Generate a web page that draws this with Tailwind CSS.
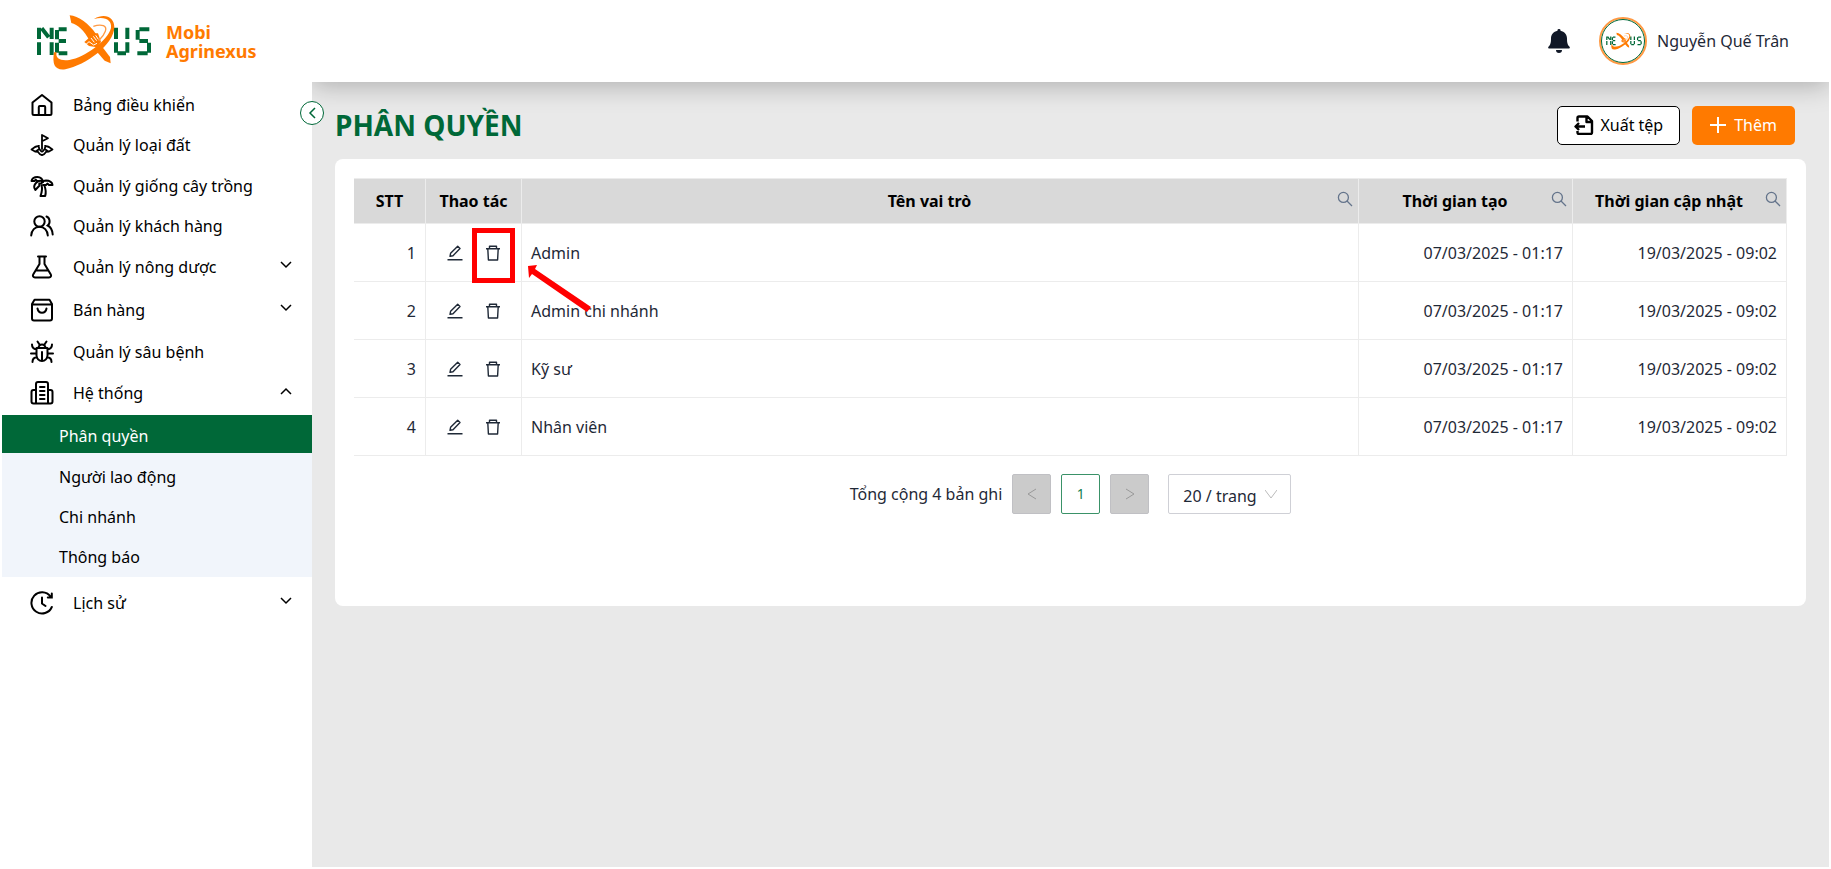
<!DOCTYPE html>
<html lang="vi">
<head>
<meta charset="utf-8">
<meta name="viewport" content="width=device-width, initial-scale=1">
<title>Phân quyền - Mobi Agrinexus</title>
<script src="https://cdn.jsdelivr.net/npm/@tailwindcss/browser@4"></script>
</head>
<body class="bg-white font-['Noto_Sans','Open_Sans',sans-serif] text-base text-black">
<!-- Shared symbols -->
<svg class="hidden" aria-hidden="true">
  <symbol id="logo" viewBox="0 0 375 192">
    <g fill="none" stroke="#006838" stroke-width="12">
      <path d="M27 53v34M27 97v38M35 55l21 27M65 53v34M65 97v38"/>
      <path d="M86 58h24M81 60v28M86 93h22M81 98v30M86 130h26"/>
      <path d="M258 53v34M258 97v31M292 53v34M292 97v31M262 130h26"/>
      <path d="M328 58h30M323 60v29M328 93h26M357 98v30M322 130h31"/>
    </g>
    <g fill="#ff7a00">
      <path d="M119 16C145 18 178 42 198 72L178 90C162 62 143 43 124 39Z"/>
      <path d="M196 120L212 104L240 141L242 160L224 152Z"/>
      <path d="M72 127C66 165 75 182 106 178C168 166 252 104 253 52C253 22 225 8 192 27C225 18 246 30 243 54C233 92 165 142 118 150C92 154 75 145 80 127Z"/>
      <path d="M163 96L193 70L204 70L213 96L201 112L177 108Z"/>
    </g>
    <path d="M190 49C216 40 232 48 226 64C221 78 213 85 206 92" fill="none" stroke="#ff9a45" stroke-width="4"/>
    <path d="M183 84l10 13M190 79l10 13M197 76l8 12M166 105l11-10l14 10l10-5" fill="none" stroke="#fff" stroke-width="3"/>
  </symbol>
  <symbol id="down" viewBox="0 0 24 24"><path d="M2 6l10 10l10-10" fill="none" stroke="currentColor" stroke-width="3"/></symbol>
  <symbol id="search" viewBox="0 0 16 16"><g fill="none" stroke="currentColor" stroke-width="1.3"><circle cx="6.4" cy="6.4" r="5"/><path d="M10 10l5 5"/></g></symbol>
  <symbol id="edit" viewBox="0 0 16 16"><path d="M3 11.3l.6-3L10.700 1.200l2.300 2.300L6 10.700zM.5 14.800h15" fill="none" stroke="currentColor" stroke-width="1.4" stroke-linejoin="round"/></symbol>
  <symbol id="trash" viewBox="0 0 16 16"><path d="M1 3.700h14M4.500 3.700v-2.400h7v2.400M2.800 3.700l.6 11.300h9.200l.6-11.300" fill="none" stroke="currentColor" stroke-width="1.4" stroke-linejoin="round"/></symbol>
</svg>

<div class="flex min-h-screen">
  <aside class="relative z-20 w-[312px] shrink-0 bg-white pl-[2px]">
    <a href="#" class="flex h-[84px] items-center pl-7">
      <svg class="h-16 w-[125px]" role="img" aria-label="Nexus"><use href="#logo"/></svg>
      <span class="ml-[11px] text-lg leading-[19px] font-bold text-[#ff7a00]">Mobi<br>Agrinexus</span>
    </a>
    <button type="button" aria-label="Thu gọn" class="absolute top-[101px] -right-3 flex size-6 items-center justify-center rounded-full border border-[#006838] bg-white text-[#006838]">
      <svg class="size-3 rotate-90"><use href="#down"/></svg>
    </button>
    <nav>
      <a href="#" class="flex h-[41px] items-center gap-[19px] pl-7">
        <svg class="size-6" viewBox="0 0 24 24" fill="none" stroke="currentColor" stroke-width="2" stroke-linejoin="round"><path d="M2.500 9.500L12 2l9.500 7.500V20.500a1.500 1.500 0 0 1-1.500 1.500H4a1.500 1.500 0 0 1-1.500-1.500z"/><path d="M8.800 21.500v-7.500a1 1 0 0 1 1-1h4.400a1 1 0 0 1 1 1v7.500"/></svg>
        <span>Bảng điều khiển</span></a>
      <a href="#" class="flex h-10 items-center gap-[19px] pl-7">
        <svg class="size-6" viewBox="0 0 24 24" fill="none" stroke="currentColor" stroke-width="1.800" stroke-linejoin="round" stroke-linecap="round"><path d="M12 16V2l6 3.200l-6 3"/><path d="M9 12.800c-1.500 0-2.500.9-4 1.200L1.500 16.500L5 18.500l3 .3c1 1.500 1.500 2.500 4 3.400c2.500-.9 3-1.900 4-3.400l3-.3l3.500-2L19 14c-1.500-.3-2.500-1.200-4-1.200M5 18.300c2 .2 3-2.300 4.500-1.800s1.200 2 2.500 2s1-1.500 2.500-2s2.500 2 4.500 1.800M9.500 16.500L8.500 13M14.500 16.500l1-3.500"/></svg>
        <span>Quản lý loại đất</span></a>
      <a href="#" class="flex h-[41px] items-center gap-[19px] pl-7">
        <svg class="size-6" viewBox="0 0 24 24" fill="none" stroke="currentColor" stroke-width="2" stroke-linejoin="round" stroke-linecap="round"><path d="M13 8c0-2.800-2.500-5-5.500-5S2 4.500 1.500 7h3l1.200-1.300L7 7h1.500"/><path d="M13.500 7.200A6 6 0 0 1 16 6.500c3.700 0 6.500 2 6.500 4.500h-3.500l-1.400-1.400L16 11h-3"/><path d="M6.200 8.800C4 11 3.800 14 5.300 16l4-4.200V9.500h1.800l1.700-1.700C10.500 6 8.500 6.500 6.200 8.800z"/><path d="M11.500 11.200C12.500 14.500 12 18 10.500 22h4.700c.8-3 .6-7-1-11"/></svg>
        <span>Quản lý giống cây trồng</span></a>
      <a href="#" class="flex h-10 items-center gap-[19px] pl-7">
        <svg class="size-6" viewBox="0 0 24 24" fill="none" stroke="currentColor" stroke-width="2" stroke-linecap="round"><circle cx="9.500" cy="7.500" r="5.200"/><path d="M1.200 21.500c.3-5.300 3.800-8.800 8.300-8.800s8 3.500 8.300 8.800M16.500 2.500c3.500 1.300 4.200 6.500 1.200 9c3 1.500 4.700 4.500 5 9"/></svg>
        <span>Quản lý khách hàng</span></a>
      <button type="button" class="flex h-[42px] w-full items-center gap-[19px] pl-7 text-left">
        <svg class="size-6" viewBox="0 0 24 24" fill="none" stroke="currentColor" stroke-width="2" stroke-linejoin="round" stroke-linecap="round"><path d="M8 1.500h8M9.500 1.500v7.500L3.200 19.500c-.8 1.500 0 3 1.800 3h14c1.800 0 2.600-1.500 1.800-3L14.500 9V1.500M5.500 15.500h13"/></svg>
        <span class="flex-1">Quản lý nông dược</span>
        <svg class="mr-5 mb-1 size-3"><use href="#down"/></svg></button>
      <button type="button" class="flex h-[43px] w-full items-center gap-[19px] pl-7 text-left">
        <svg class="size-6" viewBox="0 0 24 24" fill="none" stroke="currentColor" stroke-width="2" stroke-linejoin="round" stroke-linecap="round"><path d="M2 6l2.500-4.200h15L22 6v14.500a2 2 0 0 1-2 2H4a2 2 0 0 1-2-2zM2 6.500h20M7.500 10.500c.5 2.800 2.200 4.200 4.500 4.200s4-1.400 4.500-4.200"/></svg>
        <span class="flex-1">Bán hàng</span>
        <svg class="mr-5 mb-1 size-3"><use href="#down"/></svg></button>
      <a href="#" class="flex h-[41px] items-center gap-[19px] pl-7">
        <svg class="size-6" viewBox="0 0 24 24" fill="none" stroke="currentColor" stroke-width="2" stroke-linejoin="round" stroke-linecap="round"><path d="M6.500 8h11v7.500a5.500 5.500 0 0 1-11 0zM8.500 8a3.500 3.500 0 0 1 7 0M12 12v9M7.500 1.500l2 3M16.500 1.500l-2 3M2 4.500c0 3 1.500 4.500 4.500 5M22 4.500c0 3-1.500 4.500-4.500 5M1 13.500h5.500M17.500 13.500H23M2.500 22c0-3 1.500-4.500 4.500-4.700M21.500 22c0-3-1.500-4.500-4.500-4.700"/></svg>
        <span>Quản lý sâu bệnh</span></a>
      <button type="button" aria-expanded="true" class="flex h-[42px] w-full items-center gap-[19px] pl-7 text-left">
        <svg class="size-6" viewBox="0 0 24 24" fill="none" stroke="currentColor" stroke-width="2" stroke-linejoin="round" stroke-linecap="round"><path d="M6 22.500V3a2 2 0 0 1 2-2h8a2 2 0 0 1 2 2v19.500M6 9H3.500a2 2 0 0 0-2 2v9.500a2 2 0 0 0 2 2h17a2 2 0 0 0 2-2V11a2 2 0 0 0-2-2H18M10 6h4.500M10 10h4.500M10 14h4.500M10 18h4.500"/></svg>
        <span class="flex-1">Hệ thống</span>
        <svg class="mr-5 mb-1 size-3 rotate-180"><use href="#down"/></svg></button>
      <div class="mt-px bg-[#f1f5fb]">
        <a href="#" aria-current="page" class="mb-1 flex h-[38px] items-center bg-[#006838] pt-1 pl-[57px] text-white">Phân quyền</a>
        <a href="#" class="flex h-10 items-center pl-[57px]">Người lao động</a>
        <a href="#" class="flex h-10 items-center pl-[57px]">Chi nhánh</a>
        <a href="#" class="flex h-10 items-center pl-[57px]">Thông báo</a>
      </div>
      <button type="button" class="mt-1 flex h-[43px] w-full items-center gap-[19px] pl-7 text-left">
        <svg class="size-6" viewBox="0 0 24 24" fill="none" stroke="currentColor" stroke-width="2" stroke-linecap="round"><path d="M21.800 16A10.600 10.600 0 1 1 20.500 5.500M21.800 2.500v4h-4M12 6.500V12.500l3.500 2.500"/></svg>
        <span class="flex-1">Lịch sử</span>
        <svg class="mr-5 mb-1 size-3"><use href="#down"/></svg></button>
    </nav>
  </aside>

  <div class="flex min-w-0 flex-1 flex-col overflow-hidden border-r-2 border-b-2 border-white bg-[#e9e9e9]">
    <header class="flex h-[82px] shrink-0 items-center justify-end bg-white pr-10 shadow-[0_4px_24px_rgba(0,0,0,0.25)]">
      <button type="button" aria-label="Thông báo" class="mr-7 text-[#111827]">
        <svg class="size-6" viewBox="0 0 24 24" fill="currentColor"><path d="M12 0a1.500 1.500 0 0 1 1.500 1.700C17.500 2.500 20 5.500 20 9.500c0 5 .8 6.500 2.500 8.200c.8.800.3 1.800-.8 1.800H2.300c-1.100 0-1.600-1-.8-1.800C3.200 16 4 14.500 4 9.500c0-4 2.500-7 6.500-7.800A1.500 1.500 0 0 1 12 0zM9 21h6a3 3 0 0 1-6 0z"/></svg>
      </button>
      <a href="#" class="flex items-center gap-[10px] text-[#1f2937]">
        <span class="flex size-12 items-center justify-center rounded-full border-2 border-[#ff9a45]">
          <span class="flex size-11 flex-col items-center justify-center rounded-full border border-[#006838] bg-white">
            <svg class="h-5 w-[39px]" aria-hidden="true"><use href="#logo"/></svg>
          </span>
        </span>
        <span>Nguyễn Quế Trân</span>
      </a>
    </header>

    <main class="px-[23px] pt-[23px]">
      <div class="flex h-10 items-center justify-between pr-[11px]">
        <h1 class="text-[28px] leading-10 font-bold text-[#006838]">PHÂN QUYỀN</h1>
        <div class="flex gap-3">
          <button type="button" class="flex h-[39px] items-center gap-[6px] rounded-[5px] border border-black bg-white px-4 text-black">
            <svg class="size-5" viewBox="0 0 20 20" fill="none" stroke="currentColor" stroke-width="2.400" stroke-linejoin="round"><path d="M3.500 6.500V3a1.500 1.500 0 0 1 1.500-1.500h8.500L18 6v11.500a1.500 1.500 0 0 1-1.500 1.500H5a1.500 1.500 0 0 1-1.500-1.500V16M12.500 1.500V7H18M11 11.500H1.500M5 8L1.500 11.500L5 15"/></svg>
            Xuất tệp</button>
          <button type="button" class="flex h-[39px] items-center gap-2 rounded-[5px] bg-[#ff7a00] px-[18px] text-white">
            <svg class="size-4" viewBox="0 0 16 16" stroke="currentColor" stroke-width="2"><path d="M8 0v16M0 8h16"/></svg>
            Thêm</button>
        </div>
      </div>

      <section class="mt-[14px] rounded-lg bg-white px-[19px] pt-[19px] pb-[92px]">
        <table class="w-full table-fixed border-separate border-spacing-0 border-t border-[#ececec]">
          <colgroup><col class="w-[72px]"><col class="w-24"><col><col class="w-[214px]"><col class="w-[214px]"></colgroup>
          <thead class="bg-[#d9d9d9] text-black">
            <tr class="h-[45px]">
              <th class="border-r border-b border-[#ececec]">STT</th>
              <th class="border-r border-b border-[#ececec]">Thao tác</th>
              <th class="border-r border-b border-[#ececec]"><div class="flex items-center pr-[5px]"><span class="flex-1">Tên vai trò</span><button type="button" aria-label="Tìm kiếm" class="pb-1 text-[#64748b]"><svg class="size-4"><use href="#search"/></svg></button></div></th>
              <th class="border-r border-b border-[#ececec]"><div class="flex items-center pr-[5px]"><span class="flex-1">Thời gian tạo</span><button type="button" aria-label="Tìm kiếm" class="pb-1 text-[#64748b]"><svg class="size-4"><use href="#search"/></svg></button></div></th>
              <th class="border-r border-b border-[#ececec]"><div class="flex items-center pr-[5px]"><span class="flex-1">Thời gian cập nhật</span><button type="button" aria-label="Tìm kiếm" class="pb-1 text-[#64748b]"><svg class="size-4"><use href="#search"/></svg></button></div></th>
            </tr>
          </thead>
          <tbody class="text-[#1f2937]">
            <tr class="h-[58px]">
              <td class="border-r border-b border-[#ececec] pr-[9px] text-right">1</td>
              <td class="border-r border-b border-[#ececec]"><div class="flex justify-center gap-[22px]">
                <button type="button" aria-label="Sửa"><svg class="size-4"><use href="#edit"/></svg></button>
                <div class="relative flex">
                  <button type="button" aria-label="Xóa"><svg class="size-4"><use href="#trash"/></svg></button>
                  <span class="pointer-events-none absolute -top-[17px] -left-[13px] z-10 h-[55px] w-[43px] border-5 border-[#ff0000]"></span>
                  <svg class="pointer-events-none absolute top-[20px] left-[43px] z-10 h-12 w-[66px]" viewBox="0 0 66 48" fill="#f00"><path d="M0 1L9 0L7 4L63 42L59 47L4 9L1 13Z"/></svg>
                </div></div></td>
              <td class="border-r border-b border-[#ececec] pl-[9px]">Admin</td>
              <td class="border-r border-b border-[#ececec] pr-[9px] text-right">07/03/2025 - 01:17</td>
              <td class="border-r border-b border-[#ececec] pr-[9px] text-right">19/03/2025 - 09:02</td>
            </tr>
            <tr class="h-[58px]">
              <td class="border-r border-b border-[#ececec] pr-[9px] text-right">2</td>
              <td class="border-r border-b border-[#ececec]"><div class="flex justify-center gap-[22px]">
                <button type="button" aria-label="Sửa"><svg class="size-4"><use href="#edit"/></svg></button>
                <button type="button" aria-label="Xóa"><svg class="size-4"><use href="#trash"/></svg></button></div></td>
              <td class="border-r border-b border-[#ececec] pl-[9px]">Admin chi nhánh</td>
              <td class="border-r border-b border-[#ececec] pr-[9px] text-right">07/03/2025 - 01:17</td>
              <td class="border-r border-b border-[#ececec] pr-[9px] text-right">19/03/2025 - 09:02</td>
            </tr>
            <tr class="h-[58px]">
              <td class="border-r border-b border-[#ececec] pr-[9px] text-right">3</td>
              <td class="border-r border-b border-[#ececec]"><div class="flex justify-center gap-[22px]">
                <button type="button" aria-label="Sửa"><svg class="size-4"><use href="#edit"/></svg></button>
                <button type="button" aria-label="Xóa"><svg class="size-4"><use href="#trash"/></svg></button></div></td>
              <td class="border-r border-b border-[#ececec] pl-[9px]">Kỹ sư</td>
              <td class="border-r border-b border-[#ececec] pr-[9px] text-right">07/03/2025 - 01:17</td>
              <td class="border-r border-b border-[#ececec] pr-[9px] text-right">19/03/2025 - 09:02</td>
            </tr>
            <tr class="h-[58px]">
              <td class="border-r border-b border-[#ececec] pr-[9px] text-right">4</td>
              <td class="border-r border-b border-[#ececec]"><div class="flex justify-center gap-[22px]">
                <button type="button" aria-label="Sửa"><svg class="size-4"><use href="#edit"/></svg></button>
                <button type="button" aria-label="Xóa"><svg class="size-4"><use href="#trash"/></svg></button></div></td>
              <td class="border-r border-b border-[#ececec] pl-[9px]">Nhân viên</td>
              <td class="border-r border-b border-[#ececec] pr-[9px] text-right">07/03/2025 - 01:17</td>
              <td class="border-r border-b border-[#ececec] pr-[9px] text-right">19/03/2025 - 09:02</td>
            </tr>
          </tbody>
        </table>

        <div class="mt-[18px] flex items-center justify-center">
          <span class="mr-[10px] text-[#1f2937]">Tổng cộng 4 bản ghi</span>
          <button type="button" disabled aria-label="Trang trước" class="mr-[10px] flex h-10 w-[39px] items-center justify-center rounded-xs border border-[#c0c0c4] bg-[#cbcbcb] text-[#999]"><svg class="size-3" viewBox="0 0 12 12" fill="none" stroke="currentColor"><path d="M10 1L2 6l8 5"/></svg></button>
          <button type="button" aria-current="page" class="mr-[10px] flex h-10 w-[39px] items-center justify-center rounded-xs border border-[#3a9268] bg-white text-sm text-[#12804d]">1</button>
          <button type="button" disabled aria-label="Trang sau" class="mr-[19px] flex h-10 w-[39px] items-center justify-center rounded-xs border border-[#c0c0c4] bg-[#cbcbcb] text-[#999]"><svg class="size-3" viewBox="0 0 12 12" fill="none" stroke="currentColor"><path d="M2 1l8 5l-8 5"/></svg></button>
          <span class="relative">
            <select aria-label="Số bản ghi mỗi trang" class="h-10 w-[123px] appearance-none rounded-xs border border-[#cfd0d6] bg-white pt-1 pl-[14px] text-[#1f2937]"><option>20 / trang</option></select>
            <svg class="pointer-events-none absolute top-[14px] right-[14px] size-3 text-[#bbb]" viewBox="0 0 12 12" fill="none" stroke="currentColor"><path d="M0 2l6 8l6-8"/></svg>
          </span>
        </div>
      </section>
    </main>
  </div>
</div>
</body>
</html>
